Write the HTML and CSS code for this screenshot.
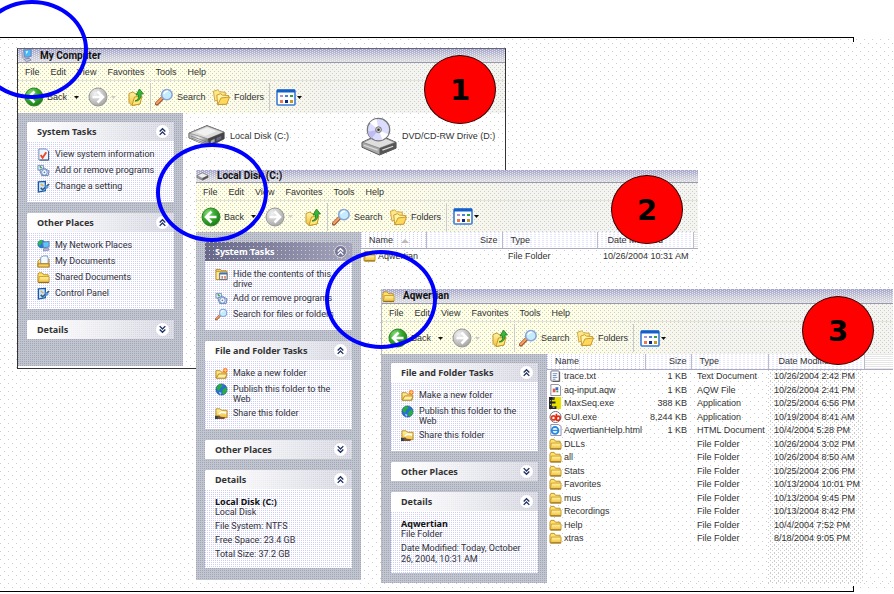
FILE: index.html
```html
<!DOCTYPE html>
<html lang="en">
<head>
<meta charset="utf-8">
<title>Explorer windows</title>
<link rel="stylesheet" href="styles.css">
</head>
<body>
<svg class="defs" aria-hidden="true">
  <defs>
    <radialGradient id="g-green" cx="35%" cy="30%" r="75%"><stop offset="0" stop-color="#8be07a"/><stop offset=".5" stop-color="#35a82c"/><stop offset="1" stop-color="#1a7a18"/></radialGradient>
    <radialGradient id="g-gray" cx="35%" cy="30%" r="75%"><stop offset="0" stop-color="#f2f2f2"/><stop offset="1" stop-color="#a4a4a4"/></radialGradient>
    <linearGradient id="g-folder" x1="0" y1="0" x2="0" y2="1"><stop offset="0" stop-color="#fff6a8"/><stop offset="1" stop-color="#f0bf3c"/></linearGradient>
    <linearGradient id="g-metal" x1="0" y1="0" x2="1" y2="0"><stop offset="0" stop-color="#b4b4b4"/><stop offset=".5" stop-color="#eee"/><stop offset="1" stop-color="#777"/></linearGradient>
    <symbol id="i-back" viewBox="0 0 20 20"><circle cx="10" cy="10" r="9" fill="url(#g-green)" stroke="#2c8428"/><path d="M10.5 4.5 5 10l5.500 5.500M5.500 10H15.500" fill="none" stroke="#fff" stroke-width="2.600"/></symbol>
    <symbol id="i-forward" viewBox="0 0 20 20"><circle cx="10" cy="10" r="9" fill="url(#g-gray)" stroke="#999"/><path d="M9.500 4.500 15 10l-5.500 5.500M14.500 10H4.500" fill="none" stroke="#fff" stroke-width="2.600"/></symbol>
    <symbol id="i-up" viewBox="0 0 16 18"><path d="M1 5.500 5 4l2 1.500L13 7l-1 9-8 1.500-3-3z" fill="url(#g-folder)" stroke="#c79a28"/><path d="M4 17.500 6.500 9 14 8l-2 8z" fill="#ffe678" stroke="#c79a28"/><path d="M7 13c3-1 4-3 3.500-6H8L11.500 1 15.500 6H13c.5 4-2 7.500-6 7z" fill="#39b53a" stroke="#1d7d20" stroke-width=".8"/></symbol>
    <symbol id="i-search" viewBox="0 0 20 18"><path d="M2 16 8 10" stroke="#a0522d" stroke-width="4" stroke-linecap="round"/><path d="M2 15.500 7.500 10" stroke="#f4a060" stroke-width="2.200" stroke-linecap="round"/><circle cx="12.500" cy="6.500" r="5.500" fill="#c4ecfc" stroke="#86a4d8" stroke-width="1.600"/><path d="M9.500 6a3.500 3.500 0 0 1 4-3" fill="none" stroke="#fff" stroke-width="1.500"/></symbol>
    <symbol id="i-folders" viewBox="0 0 20 18"><path d="M1.500 3 6 1.500 8 3.500l6 .5v8L3 13z" fill="#ffe88a" stroke="#d0a238"/><path d="M5 7l4-1.500L11 7l6.500.5-2 9L6 17z" fill="#fff3a4" stroke="#c9982c"/><path d="M6 17 9.500 10l9-1-3 7.500z" fill="#ffd95c" stroke="#c9982c"/></symbol>
    <symbol id="i-views" viewBox="0 0 20 17"><rect x="1" y="1" width="18" height="15" rx="1" fill="#fff" stroke="#3a7cd8" stroke-width="1.600"/><path d="M1 2h18" stroke="#1560c8" stroke-width="3"/><path d="M4 6h3v2H4z" fill="#b090d8"/><path d="M9 6h3v2H9z" fill="#4880e0"/><path d="M14 6h3v2h-3z" fill="#30a040"/><path d="M4 11h3v3H4z" fill="#f07848"/><path d="M9 11h3v3H9z" fill="#102880"/><path d="M14 11h3v3h-3z" fill="#c89820"/></symbol>
    <symbol id="i-folder" viewBox="0 0 14 13"><path d="M1 3.500 2 1.500h3.500l1.500 2h5v8H1z" fill="#ffe26a" stroke="#c08c1c"/><path d="M2.500 5.500h10.500v6H1.500z" fill="url(#g-folder)" stroke="#c99a2a"/><path d="M1.500 12h11.500" stroke="#8a6410"/></symbol>
    <symbol id="i-newfolder" viewBox="0 0 14 13"><path d="M1 3.500h4.500L7 5h5v6.500H1z" fill="url(#g-folder)" stroke="#bd881c"/><path d="M1.500 11.500 4 7h9l-2 4.500z" fill="#fff0a0" stroke="#bd881c"/><circle cx="11" cy="3" r="2.500" fill="#ff6a30"/><path d="M11 1v4M9 3h4" stroke="#ffe060"/></symbol>
    <symbol id="i-sharefolder" viewBox="0 0 14 13"><path d="M1 1.500h4.500L7 3h6v8H1z" fill="url(#g-folder)" stroke="#bd881c"/><path d="M4 7l3-2 5 1" fill="none" stroke="#fff" stroke-width="1.500"/><path d="M1 11c1-3 4-3 5-1l5 .5-1 2H1z" fill="#7c5030"/><path d="M0 9h3v3.500H0z" fill="#344"/></symbol>
    <symbol id="i-globe" viewBox="0 0 14 13"><circle cx="7" cy="6.500" r="6" fill="#2870d0" stroke="#184890" stroke-width=".7"/><path d="M3 2c3-2 5-1 5 1L5.500 5 4.500 8 1.500 6zM8 7l4-3 1 4-3 4-2-1z" fill="#28b038"/><path d="M4 9l3 1-1 2.500z" fill="#9ed8ff"/></symbol>
    <symbol id="i-info" viewBox="0 0 14 13"><path d="M2 .5h8l2.500 2.500v9.500H2z" fill="#eef4ff" stroke="#6884b0"/><path d="M12.500 3v9.500H3" fill="none" stroke="#34507c"/><path d="M4 7l2 3 4-6" fill="none" stroke="#f04820" stroke-width="2"/></symbol>
    <symbol id="i-programs" viewBox="0 0 14 13"><path d="M1 1h6v5H1z" fill="#d8eaff" stroke="#7894b8"/><path d="M3 6l5-2 5 3-1 5H5z" fill="#dcdcec" stroke="#6a7ea8"/><circle cx="8" cy="8.500" r="3" fill="#fff" stroke="#5888c8"/><circle cx="8" cy="8.500" r="1" fill="#5080c0"/><path d="M3 2l2 2" stroke="#38a040" stroke-width="1.500"/></symbol>
    <symbol id="i-setting" viewBox="0 0 14 13"><path d="M1.500 1.500 9 1v10l-7.500 1.500z" fill="#c4e4ff" stroke="#1c58a0" stroke-width="1.400"/><path d="M4 8l2 2 7-6" fill="none" stroke="#345a80" stroke-width="1.600"/><path d="M4 4l3 2" stroke="#f0a830" stroke-width="1.500"/><path d="M9 4l4 3-4 3" fill="#5c9cd8"/></symbol>
    <symbol id="i-network" viewBox="0 0 14 13"><circle cx="5" cy="5" r="4.500" fill="#2878d0"/><path d="M1 4c1-3 4-4 5-3L5 4 3 7z" fill="#30b848"/><path d="M6 3l7-1v6l-6 1z" fill="#58c8f8" stroke="#6878b0"/><path d="M7 10l5-1 1 2.500-6 1z" fill="#b8b8d8" stroke="#7878a0" stroke-width=".7"/></symbol>
    <symbol id="i-docs" viewBox="0 0 14 13"><path d="M1 6 3 4h10v8H1z" fill="url(#g-folder)" stroke="#b88820"/><path d="M4 9V2l3-1.500h4L12 3v6z" fill="#f4faff" stroke="#7894bc"/><path d="M1 9h12v3.500H1z" fill="#f8cf58" stroke="#a87818"/></symbol>
    <symbol id="i-hide" viewBox="0 0 14 13"><path d="M1 3V1h5l1 1.500h5V5" fill="#ffe278" stroke="#b88820"/><path d="M1 3h12v9H1z" fill="#ffe88c" stroke="#b88820"/><path d="M5 5h8v7H5z" fill="#fff" stroke="#50688c"/><path d="M5 5.500h8" stroke="#3c70c0" stroke-width="2"/><path d="M7 8h1.500v3H7zM10 8h1.500v3H10z" fill="#d86848"/></symbol>
    <symbol id="i-computer" viewBox="0 0 14 14"><path d="M4 1l8-.5V8l-7 1z" fill="#48b8f8" stroke="#6c84b8"/><path d="M6 2.500l3-.5-2 4z" fill="#c8f0ff"/><path d="M7 9h3v2H7z" fill="#8890b0"/><path d="M4 11l6-1 2 2-5 1.500z" fill="#c8c8dc" stroke="#74789c" stroke-width=".8"/><path d="M2 4h2v6H2z" fill="#a8acc8"/></symbol>
    <symbol id="i-minidisk" viewBox="0 0 14 10"><path d="M1 4 7 1l6 3v2L7 9 1 6z" fill="#999" stroke="#666" stroke-width=".6"/><path d="M2 4 7 1.500 12 4 7 6.500z" fill="#eee"/><path d="M7 9l6-3V4L7 6.500z" fill="#555"/></symbol>
    <symbol id="i-disk" viewBox="0 0 40 24"><path d="M1 9 20 1l18 7v7L22 23 1 14z" fill="#9c9c9c" stroke="#555"/><path d="M1.500 9 20 1.500 37.500 8 21 15z" fill="#dcdcdc" stroke="#888" stroke-width=".7"/><path d="M21 15 38 8v7L22 23z" fill="#444"/><path d="M1.500 9.500 21 15.500V22.500L1.500 14z" fill="url(#g-metal)"/><path d="M8 8 20 3l10 4-12 5z" fill="#fff" opacity=".6"/><path d="M24 17l4-2v3l-4 2z" fill="#aaa"/><path d="M30 14l5-2v3l-5 2.500z" fill="#68688c"/><path d="M3 12l16 6M3 14l16 6" stroke="#666" stroke-width=".7"/></symbol>
    <symbol id="i-dvd" viewBox="0 0 38 40"><path d="M1 26 18 18l18 8v6L19 39 1 31z" fill="#aaa" stroke="#555"/><path d="M2 26 18 19l17 7-16 6z" fill="#dedede" stroke="#777" stroke-width=".7"/><path d="M19 32 36 26v6L19 39z" fill="#555"/><path d="M3 29l14 5M22 34l11-4" stroke="#ddd" stroke-width="1.200"/><circle cx="18" cy="13" r="11.500" fill="#dcdcff" stroke="#777" stroke-width="1.300"/><path d="M18 13 9 6a11 11 0 0 1 7-4z" fill="#fff"/><path d="M18 13l10 5a11 11 0 0 1-6 5z" fill="#fff"/><path d="M18 13 7 15a11 11 0 0 0 4 7z" fill="#bdbdf4"/><circle cx="18" cy="13" r="3" fill="#ccc" stroke="#777"/><circle cx="18" cy="13" r="1.300" fill="#333"/></symbol>
    <symbol id="i-txt" viewBox="0 0 14 13"><rect x="2" y="1" width="9" height="11" rx="1" fill="#fff" stroke="#667"/><path d="M4 4h5M4 6h4M4 8h5M4 10h3" stroke="#6a88b8"/><path d="M11.500 2v10.500H4" fill="none" stroke="#555"/></symbol>
    <symbol id="i-aqw" viewBox="0 0 14 13"><path d="M2 .5h8l2.500 2v10H2z" fill="#fff" stroke="#889"/><path d="M4 5h3v4H4z" fill="#e05848"/><path d="M7 3.500h3v3H7z" fill="#3c68d0"/><path d="M8 7h2v2H8z" fill="#38a048"/></symbol>
    <symbol id="i-maxseq" viewBox="0 0 14 13"><path d="M1 0h12v13H1z" fill="#e8e000"/><path d="M0 0h6v3H3v2h4v2H3v3h5v3H0z" fill="#222"/><path d="M1 4h1M1 8h1M4 1h1M4 11h2" stroke="#ddd"/></symbol>
    <symbol id="i-gui" viewBox="0 0 14 13"><circle cx="7" cy="6.500" r="6" fill="#fff" stroke="#667"/><circle cx="4.800" cy="7.500" r="2.200" fill="none" stroke="#e83818" stroke-width="1.800"/><path d="M8 3v7M7.500 9.500c3 1.500 5-.5 4.500-2.500s-3-2-4 0" fill="none" stroke="#e02810" stroke-width="1.800"/></symbol>
    <symbol id="i-html" viewBox="0 0 14 13"><path d="M2 .5h8l3 2v10H2z" fill="#fff" stroke="#88a"/><circle cx="6.500" cy="7" r="3.700" fill="none" stroke="#2888e0" stroke-width="2"/><path d="M3 7h7" stroke="#2888e0" stroke-width="1.500"/></symbol>
    <symbol id="i-collapse" viewBox="0 0 8 8"><path d="M1.500 4 4 1.500 6.500 4M1.500 7 4 4.500 6.500 7" fill="none" stroke="currentColor" stroke-width="1.200"/></symbol>
    <symbol id="i-expand" viewBox="0 0 8 8"><path d="M1.500 1 4 3.500 6.500 1M1.500 4 4 6.500 6.500 4" fill="none" stroke="currentColor" stroke-width="1.200"/></symbol>
    <symbol id="i-caret" viewBox="0 0 5 3"><path d="M0 0h5L2.500 3z" fill="currentColor"/></symbol>
  </defs>
</svg>

<main class="desktop">
  <div class="frame"></div>

  <section class="window window-computer">
    <header class="titlebar"><svg><use href="#i-computer"/></svg><h1>My Computer</h1></header>
    <nav class="menubar"><button>File</button><button>Edit</button><button>View</button><button>Favorites</button><button>Tools</button><button>Help</button></nav>
    <div class="toolbar">
      <button class="tool back"><svg class="ico-nav"><use href="#i-back"/></svg>Back<svg class="caret"><use href="#i-caret"/></svg></button>
      <button class="tool forward" aria-label="Forward"><svg class="ico-nav"><use href="#i-forward"/></svg><svg class="caret"><use href="#i-caret"/></svg></button>
      <button class="tool up" aria-label="Up"><svg class="ico-up"><use href="#i-up"/></svg></button>
      <button class="tool search"><svg class="ico-tool"><use href="#i-search"/></svg>Search</button>
      <button class="tool folders"><svg class="ico-tool"><use href="#i-folders"/></svg>Folders</button>
      <button class="tool views" aria-label="Views"><svg class="ico-views"><use href="#i-views"/></svg><svg class="caret"><use href="#i-caret"/></svg></button>
    </div>
    <div class="body">
      <aside class="sidebar">
        <section class="panel">
          <div class="panel-head"><h2>System Tasks</h2><button aria-label="Collapse"><svg><use href="#i-collapse"/></svg></button></div>
          <ul>
            <li><a href="#"><svg><use href="#i-info"/></svg><span>View system information</span></a></li>
            <li><a href="#"><svg><use href="#i-programs"/></svg><span>Add or remove programs</span></a></li>
            <li><a href="#"><svg><use href="#i-setting"/></svg><span>Change a setting</span></a></li>
          </ul>
        </section>
        <section class="panel">
          <div class="panel-head"><h2>Other Places</h2><button aria-label="Collapse"><svg><use href="#i-collapse"/></svg></button></div>
          <ul>
            <li><a href="#"><svg><use href="#i-network"/></svg><span>My Network Places</span></a></li>
            <li><a href="#"><svg><use href="#i-docs"/></svg><span>My Documents</span></a></li>
            <li><a href="#"><svg><use href="#i-folder"/></svg><span>Shared Documents</span></a></li>
            <li><a href="#"><svg><use href="#i-setting"/></svg><span>Control Panel</span></a></li>
          </ul>
        </section>
        <section class="panel">
          <div class="panel-head"><h2>Details</h2><button aria-label="Expand"><svg><use href="#i-expand"/></svg></button></div>
        </section>
      </aside>
      <div class="content drives">
        <a href="#" class="drive"><svg class="ico-disk"><use href="#i-disk"/></svg>Local Disk (C:)</a>
        <a href="#" class="drive"><svg class="ico-dvd"><use href="#i-dvd"/></svg>DVD/CD-RW Drive (D:)</a>
      </div>
    </div>
  </section>

  <section class="window window-disk">
    <header class="titlebar"><svg><use href="#i-minidisk"/></svg><h1>Local Disk (C:)</h1></header>
    <nav class="menubar"><button>File</button><button>Edit</button><button>View</button><button>Favorites</button><button>Tools</button><button>Help</button></nav>
    <div class="toolbar">
      <button class="tool back"><svg class="ico-nav"><use href="#i-back"/></svg>Back<svg class="caret"><use href="#i-caret"/></svg></button>
      <button class="tool forward" aria-label="Forward"><svg class="ico-nav"><use href="#i-forward"/></svg><svg class="caret"><use href="#i-caret"/></svg></button>
      <button class="tool up" aria-label="Up"><svg class="ico-up"><use href="#i-up"/></svg></button>
      <button class="tool search"><svg class="ico-tool"><use href="#i-search"/></svg>Search</button>
      <button class="tool folders"><svg class="ico-tool"><use href="#i-folders"/></svg>Folders</button>
      <button class="tool views" aria-label="Views"><svg class="ico-views"><use href="#i-views"/></svg><svg class="caret"><use href="#i-caret"/></svg></button>
    </div>
    <div class="body">
      <aside class="sidebar">
        <section class="panel primary">
          <div class="panel-head"><h2>System Tasks</h2><button aria-label="Collapse"><svg><use href="#i-collapse"/></svg></button></div>
          <ul>
            <li><a href="#"><svg><use href="#i-hide"/></svg><span>Hide the contents of this drive</span></a></li>
            <li><a href="#"><svg><use href="#i-programs"/></svg><span>Add or remove programs</span></a></li>
            <li><a href="#"><svg><use href="#i-search"/></svg><span>Search for files or folders</span></a></li>
          </ul>
        </section>
        <section class="panel">
          <div class="panel-head"><h2>File and Folder Tasks</h2><button aria-label="Collapse"><svg><use href="#i-collapse"/></svg></button></div>
          <ul>
            <li><a href="#"><svg><use href="#i-newfolder"/></svg><span>Make a new folder</span></a></li>
            <li><a href="#"><svg><use href="#i-globe"/></svg><span>Publish this folder to the Web</span></a></li>
            <li><a href="#"><svg><use href="#i-sharefolder"/></svg><span>Share this folder</span></a></li>
          </ul>
        </section>
        <section class="panel">
          <div class="panel-head"><h2>Other Places</h2><button aria-label="Expand"><svg><use href="#i-expand"/></svg></button></div>
        </section>
        <section class="panel">
          <div class="panel-head"><h2>Details</h2><button aria-label="Collapse"><svg><use href="#i-collapse"/></svg></button></div>
          <div class="details">
            <p><strong>Local Disk (C:)</strong>Local Disk</p>
            <p>File System: NTFS</p>
            <p>Free Space: 23.4 GB</p>
            <p>Total Size: 37.2 GB</p>
          </div>
        </section>
      </aside>
      <div class="content">
        <table>
          <colgroup><col class="c-name"><col class="c-size"><col class="c-type"><col class="c-date"><col></colgroup>
          <thead><tr><th>Name<span class="sort"></span></th><th>Size</th><th>Type</th><th>Date Modified</th><th></th></tr></thead>
          <tbody><tr><td><svg><use href="#i-folder"/></svg><span class="selected">Aqwertian</span></td><td></td><td>File Folder</td><td>10/26/2004 10:31 AM</td><td></td></tr></tbody>
        </table>
      </div>
    </div>
  </section>

  <section class="window window-folder">
    <header class="titlebar"><svg><use href="#i-folder"/></svg><h1>Aqwertian</h1></header>
    <nav class="menubar"><button>File</button><button>Edit</button><button>View</button><button>Favorites</button><button>Tools</button><button>Help</button></nav>
    <div class="toolbar">
      <button class="tool back"><svg class="ico-nav"><use href="#i-back"/></svg>Back<svg class="caret"><use href="#i-caret"/></svg></button>
      <button class="tool forward" aria-label="Forward"><svg class="ico-nav"><use href="#i-forward"/></svg><svg class="caret"><use href="#i-caret"/></svg></button>
      <button class="tool up" aria-label="Up"><svg class="ico-up"><use href="#i-up"/></svg></button>
      <button class="tool search"><svg class="ico-tool"><use href="#i-search"/></svg>Search</button>
      <button class="tool folders"><svg class="ico-tool"><use href="#i-folders"/></svg>Folders</button>
      <button class="tool views" aria-label="Views"><svg class="ico-views"><use href="#i-views"/></svg><svg class="caret"><use href="#i-caret"/></svg></button>
    </div>
    <div class="body">
      <aside class="sidebar">
        <section class="panel">
          <div class="panel-head"><h2>File and Folder Tasks</h2><button aria-label="Collapse"><svg><use href="#i-collapse"/></svg></button></div>
          <ul>
            <li><a href="#"><svg><use href="#i-newfolder"/></svg><span>Make a new folder</span></a></li>
            <li><a href="#"><svg><use href="#i-globe"/></svg><span>Publish this folder to the Web</span></a></li>
            <li><a href="#"><svg><use href="#i-sharefolder"/></svg><span>Share this folder</span></a></li>
          </ul>
        </section>
        <section class="panel">
          <div class="panel-head"><h2>Other Places</h2><button aria-label="Expand"><svg><use href="#i-expand"/></svg></button></div>
        </section>
        <section class="panel">
          <div class="panel-head"><h2>Details</h2><button aria-label="Collapse"><svg><use href="#i-collapse"/></svg></button></div>
          <div class="details">
            <p><strong>Aqwertian</strong>File Folder</p>
            <p>Date Modified: Today, October 26, 2004, 10:31 AM</p>
          </div>
        </section>
      </aside>
      <div class="content sorted-date">
        <table>
          <colgroup><col class="c-name"><col class="c-size"><col class="c-type"><col class="c-date"><col></colgroup>
          <thead><tr><th>Name</th><th>Size</th><th>Type</th><th>Date Modified</th><th></th></tr></thead>
          <tbody>
            <tr><td><svg><use href="#i-txt"/></svg>trace.txt</td><td>1 KB</td><td>Text Document</td><td>10/26/2004 2:42 PM</td><td></td></tr>
            <tr><td><svg><use href="#i-aqw"/></svg>aq-input.aqw</td><td>1 KB</td><td>AQW File</td><td>10/26/2004 2:41 PM</td><td></td></tr>
            <tr><td><svg><use href="#i-maxseq"/></svg>MaxSeq.exe</td><td>388 KB</td><td>Application</td><td>10/25/2004 6:56 PM</td><td></td></tr>
            <tr><td><svg><use href="#i-gui"/></svg>GUI.exe</td><td>8,244 KB</td><td>Application</td><td>10/19/2004 8:41 AM</td><td></td></tr>
            <tr><td><svg><use href="#i-html"/></svg>AqwertianHelp.html</td><td>1 KB</td><td>HTML Document</td><td>10/4/2004 5:28 PM</td><td></td></tr>
            <tr><td><svg><use href="#i-folder"/></svg>DLLs</td><td></td><td>File Folder</td><td>10/26/2004 3:02 PM</td><td></td></tr>
            <tr><td><svg><use href="#i-folder"/></svg>all</td><td></td><td>File Folder</td><td>10/26/2004 8:50 AM</td><td></td></tr>
            <tr><td><svg><use href="#i-folder"/></svg>Stats</td><td></td><td>File Folder</td><td>10/25/2004 2:06 PM</td><td></td></tr>
            <tr><td><svg><use href="#i-folder"/></svg>Favorites</td><td></td><td>File Folder</td><td>10/13/2004 10:01 PM</td><td></td></tr>
            <tr><td><svg><use href="#i-folder"/></svg>mus</td><td></td><td>File Folder</td><td>10/13/2004 9:45 PM</td><td></td></tr>
            <tr><td><svg><use href="#i-folder"/></svg>Recordings</td><td></td><td>File Folder</td><td>10/13/2004 8:42 PM</td><td></td></tr>
            <tr><td><svg><use href="#i-folder"/></svg>Help</td><td></td><td>File Folder</td><td>10/4/2004 7:52 PM</td><td></td></tr>
            <tr><td><svg><use href="#i-folder"/></svg>xtras</td><td></td><td>File Folder</td><td>8/18/2004 9:05 PM</td><td></td></tr>
          </tbody>
        </table>
      </div>
    </div>
  </section>

  <span class="ring ring-1"></span>
  <span class="ring ring-2"></span>
  <span class="ring ring-3"></span>
  <strong class="step step-1">1</strong>
  <strong class="step step-2">2</strong>
  <strong class="step step-3">3</strong>
</main>
</body>
</html>
```
FILE: styles.css
```css
/* Single-pixel dots are conic gradients whose only opaque quadrant is the tile's top-left pixel. */
:root {
  --dot-gray: conic-gradient(at 1px 1px, transparent 75%, #cccccc 0);
  --dot-blue: conic-gradient(at 1px 1px, transparent 75%, #ccccff 0);
  --dot-slate: conic-gradient(at 1px 1px, transparent 75%, #a4a4c0 0);
  --dot-white: conic-gradient(at 1px 1px, transparent 75%, rgba(255, 255, 255, .6) 0);
  --paper: var(--dot-gray) 0 0 / 8px 8px, var(--dot-gray) 4px 4px / 8px 8px, #fff;
  --ui: "Liberation Sans", Arial, sans-serif;
  --task: Roboto, "Open Sans", sans-serif;
  --heading: "Noto Sans", "Open Sans", sans-serif;
}

* { box-sizing: border-box; }

body {
  margin: 0;
  background: #fff;
  color: #333;
  font: 9px/10px var(--ui);
}

button {
  border: 0;
  padding: 0;
  background: none;
  color: inherit;
  font: inherit;
}

a { color: inherit; text-decoration: none; }
h1, h2, p, ul { margin: 0; padding: 0; font-size: inherit; }
ul { list-style: none; }
svg { display: block; flex: none; }
.defs { position: absolute; width: 0; height: 0; }

.desktop {
  position: relative;
  min-height: 100vh;
  padding-top: 37px;
  overflow: hidden;
}

.frame {
  height: 555px;
  margin-right: 40px;
  border-top: 1px solid #000;
  border-bottom: 1px solid #000;
  position: relative;
}

.frame::before {
  content: "";
  position: absolute;
  inset: 1px -40px 3px 0;
  background: var(--paper);
}

.frame::after {
  content: "";
  position: absolute;
  inset: 0 0 0 auto;
  width: 1px;
  background: linear-gradient(#000 4px, transparent 4px calc(100% - 5px), #000 calc(100% - 5px));
}

/* Windows */
.window {
  position: absolute;
  background: var(--paper);
}

.window-computer {
  left: 17px;
  top: 48px;
  width: 489px;
  border: 1px solid #333;
  border-top-color: #667;
  padding-bottom: 2px;
}

.window-disk { left: 196px; top: 170px; width: 502px; }

.window-folder {
  left: 381px;
  top: 289px;
  width: 512px;
  border-left: 1px solid #bbb;
}

.titlebar {
  display: flex;
  align-items: center;
  gap: 7px;
  height: 15px;
  padding: 0 2px;
  border-bottom: 1px solid #9999aa;
  background:
    var(--dot-white) 0 0 / 4px 2px,
    var(--dot-white) 2px 1px / 4px 2px,
    linear-gradient(#a4a4cc, #ccccd8 60%, #dcdce4);
  color: #111;
}

.titlebar svg { width: 13px; height: 13px; }
.titlebar h1 { font: bold 10px/12px var(--task); }
.window-computer .titlebar { height: 14px; }
.window-disk .titlebar { height: 13px; padding: 0; gap: 8px; }
.window-folder .titlebar { padding: 0; gap: 8px; }

.menubar, .toolbar {
  background:
    var(--dot-gray) 0 0 / 4px 4px,
    var(--dot-gray) 2px 2px / 4px 4px,
    linear-gradient(to right, #ffffe4 35%, #f4f4f0 65%);
}

.menubar {
  display: flex;
  align-items: center;
  gap: 11px;
  height: 18px;
  padding-left: 7px;
  border-bottom: 1px solid #e4e4d8;
}

.toolbar {
  display: flex;
  align-items: center;
  height: 32px;
  padding-left: 6px;
}

.window-disk .toolbar { height: 31px; padding-left: 5px; }

.tool { display: flex; align-items: center; gap: 3px; }
.tool svg.caret { width: 5px; height: 3px; color: #111; }
.ico-nav { width: 20px; height: 20px; }
.ico-up { width: 16px; height: 20px; }
.ico-tool { width: 19px; height: 18px; }
.ico-views { width: 20px; height: 17px; }
.back { width: 64px; }
.back .caret { margin-left: 4px; }
.forward { width: 40px; }
.forward .caret.caret { color: #ccc; }
.up { width: 22px; }
.search {
  width: 62px;
  height: 28px;
  padding-left: 4px;
  border-left: 1px solid #ccc;
}
.folders {
  width: 58px;
  height: 28px;
  border-right: 1px solid #ccc;
}
.views { padding-left: 6px; gap: 1px; }

.body { display: flex; }

/* Task pane */
.sidebar {
  flex: none;
  display: flex;
  flex-direction: column;
  gap: 11px;
  width: 165px;
  padding: 9px 9px 10px;
  background:
    var(--dot-slate) 0 0 / 2px 2px,
    #c0c6cc;
  font-family: var(--task);
}

.window-computer .sidebar { padding-bottom: 27px; }
.window-disk .sidebar { padding: 10px 9px 12px; }

.panel {
  background:
    var(--dot-blue) 0 0 / 2px 2px,
    #fff;
}

.panel-head {
  display: flex;
  align-items: center;
  justify-content: space-between;
  height: 19px;
  padding: 0 5px 0 10px;
  border-radius: 2px 2px 0 0;
  background:
    linear-gradient(to right, #fff 5%, transparent),
    var(--dot-gray) 0 0 / 2px 2px,
    #dedeec;
}

.panel-head h2 { font: bold 9px/12px var(--heading); }

.panel-head button {
  display: grid;
  place-items: center;
  width: 13px;
  height: 13px;
  border-radius: 50%;
  background: #fff;
  color: #223366;
}

.panel-head svg { width: 9px; height: 9px; }

.primary .panel-head {
  background:
    var(--dot-gray) 0 0 / 4px 4px,
    linear-gradient(to right, #666688, #a4a4bc);
  color: #fff;
}

.primary .panel-head button {
  border: 1px solid #ddd;
  background: #777799;
  color: #fff;
}

.panel ul {
  display: grid;
  gap: 3px;
  padding: 7px 6px 9px 10px;
}

.panel li a { display: flex; align-items: flex-start; gap: 5px; }
.panel li svg { width: 13px; height: 13px; }
.panel li span { padding-top: 1px; }

.details {
  display: grid;
  gap: 3px;
  padding: 7px 10px 8px;
  line-height: 11px;
}

.details strong {
  display: block;
  color: #111;
  font-family: var(--heading);
}

/* Content pane */
.content { flex: 1; min-width: 0; position: relative; }

.drives { display: flex; align-items: flex-start; padding: 3px 0 0 5px; }
.drive { flex: none; display: flex; align-items: center; gap: 4px; width: 173px; height: 40px; white-space: nowrap; }
.drive:last-child { flex: 0 1 auto; }
.ico-disk { width: 38px; height: 24px; }
.ico-dvd { width: 37px; height: 39px; }

.sorted-date::before {
  content: "";
  position: absolute;
  left: 221px;
  top: 16px;
  bottom: 0;
  width: 96px;
  background: var(--dot-gray) 0 0 / 4px 4px, var(--dot-gray) 2px 2px / 4px 4px;
}

table {
  position: relative;
  width: 100%;
  table-layout: fixed;
  border-collapse: collapse;
}

.c-name { width: 98px; }
.c-size { width: 46px; }
.c-type { width: 77px; }
.c-date { width: 96px; }
.window-disk .c-name { width: 65px; }
.window-disk .c-size { width: 76px; }
.window-disk .c-type { width: 95px; }

th {
  height: 15px;
  padding: 0 0 0 8px;
  border-right: 1px solid #bbc;
  border-bottom: 1px solid #aaaac0;
  background: var(--dot-blue) 0 0 / 4px 2px, #fff;
  font-weight: normal;
  text-align: left;
  white-space: nowrap;
}

th:nth-child(4) { padding-left: 10px; }
th:last-child { border-right: 0; background: var(--dot-gray) 0 0 / 2px 2px, #fff; }

td {
  height: 13px;
  padding: 0 0 0 6px;
  white-space: nowrap;
}

tbody tr:nth-child(odd) td { height: 14px; }
.window-disk th, .window-disk tbody tr td { height: 16px; }
td:first-child { padding-left: 2px; }
td svg {
  display: inline-block;
  width: 13px;
  height: 12px;
  margin-right: 2px;
  vertical-align: -3px;
}
th:nth-child(2), td:nth-child(2) { padding: 0 4px 0 0; text-align: right; }

.sort {
  display: inline-block;
  margin-left: 8px;
  border: 4px solid transparent;
  border-top: 0;
  border-bottom: 4px solid #bbb;
}

/* Annotations */
.ring {
  position: absolute;
  width: 112px;
  height: 99px;
  border: 4px solid #0000ff;
  border-radius: 50%;
}

.ring-1 { left: -24px; top: 0; }
.ring-2 { left: 156px; top: 143px; }
.ring-3 { left: 325px; top: 250px; }

.step {
  position: absolute;
  display: grid;
  place-items: center;
  width: 72px;
  height: 69px;
  border: 1px solid #300;
  border-radius: 50%;
  background: #ff0000;
  color: #000;
  font: bold 29px/32px "DejaVu Sans", Verdana, sans-serif;
}

.step-1 { left: 424px; top: 55px; }
.step-2 { left: 611px; top: 175px; }
.step-3 { left: 802px; top: 296px; }
```
